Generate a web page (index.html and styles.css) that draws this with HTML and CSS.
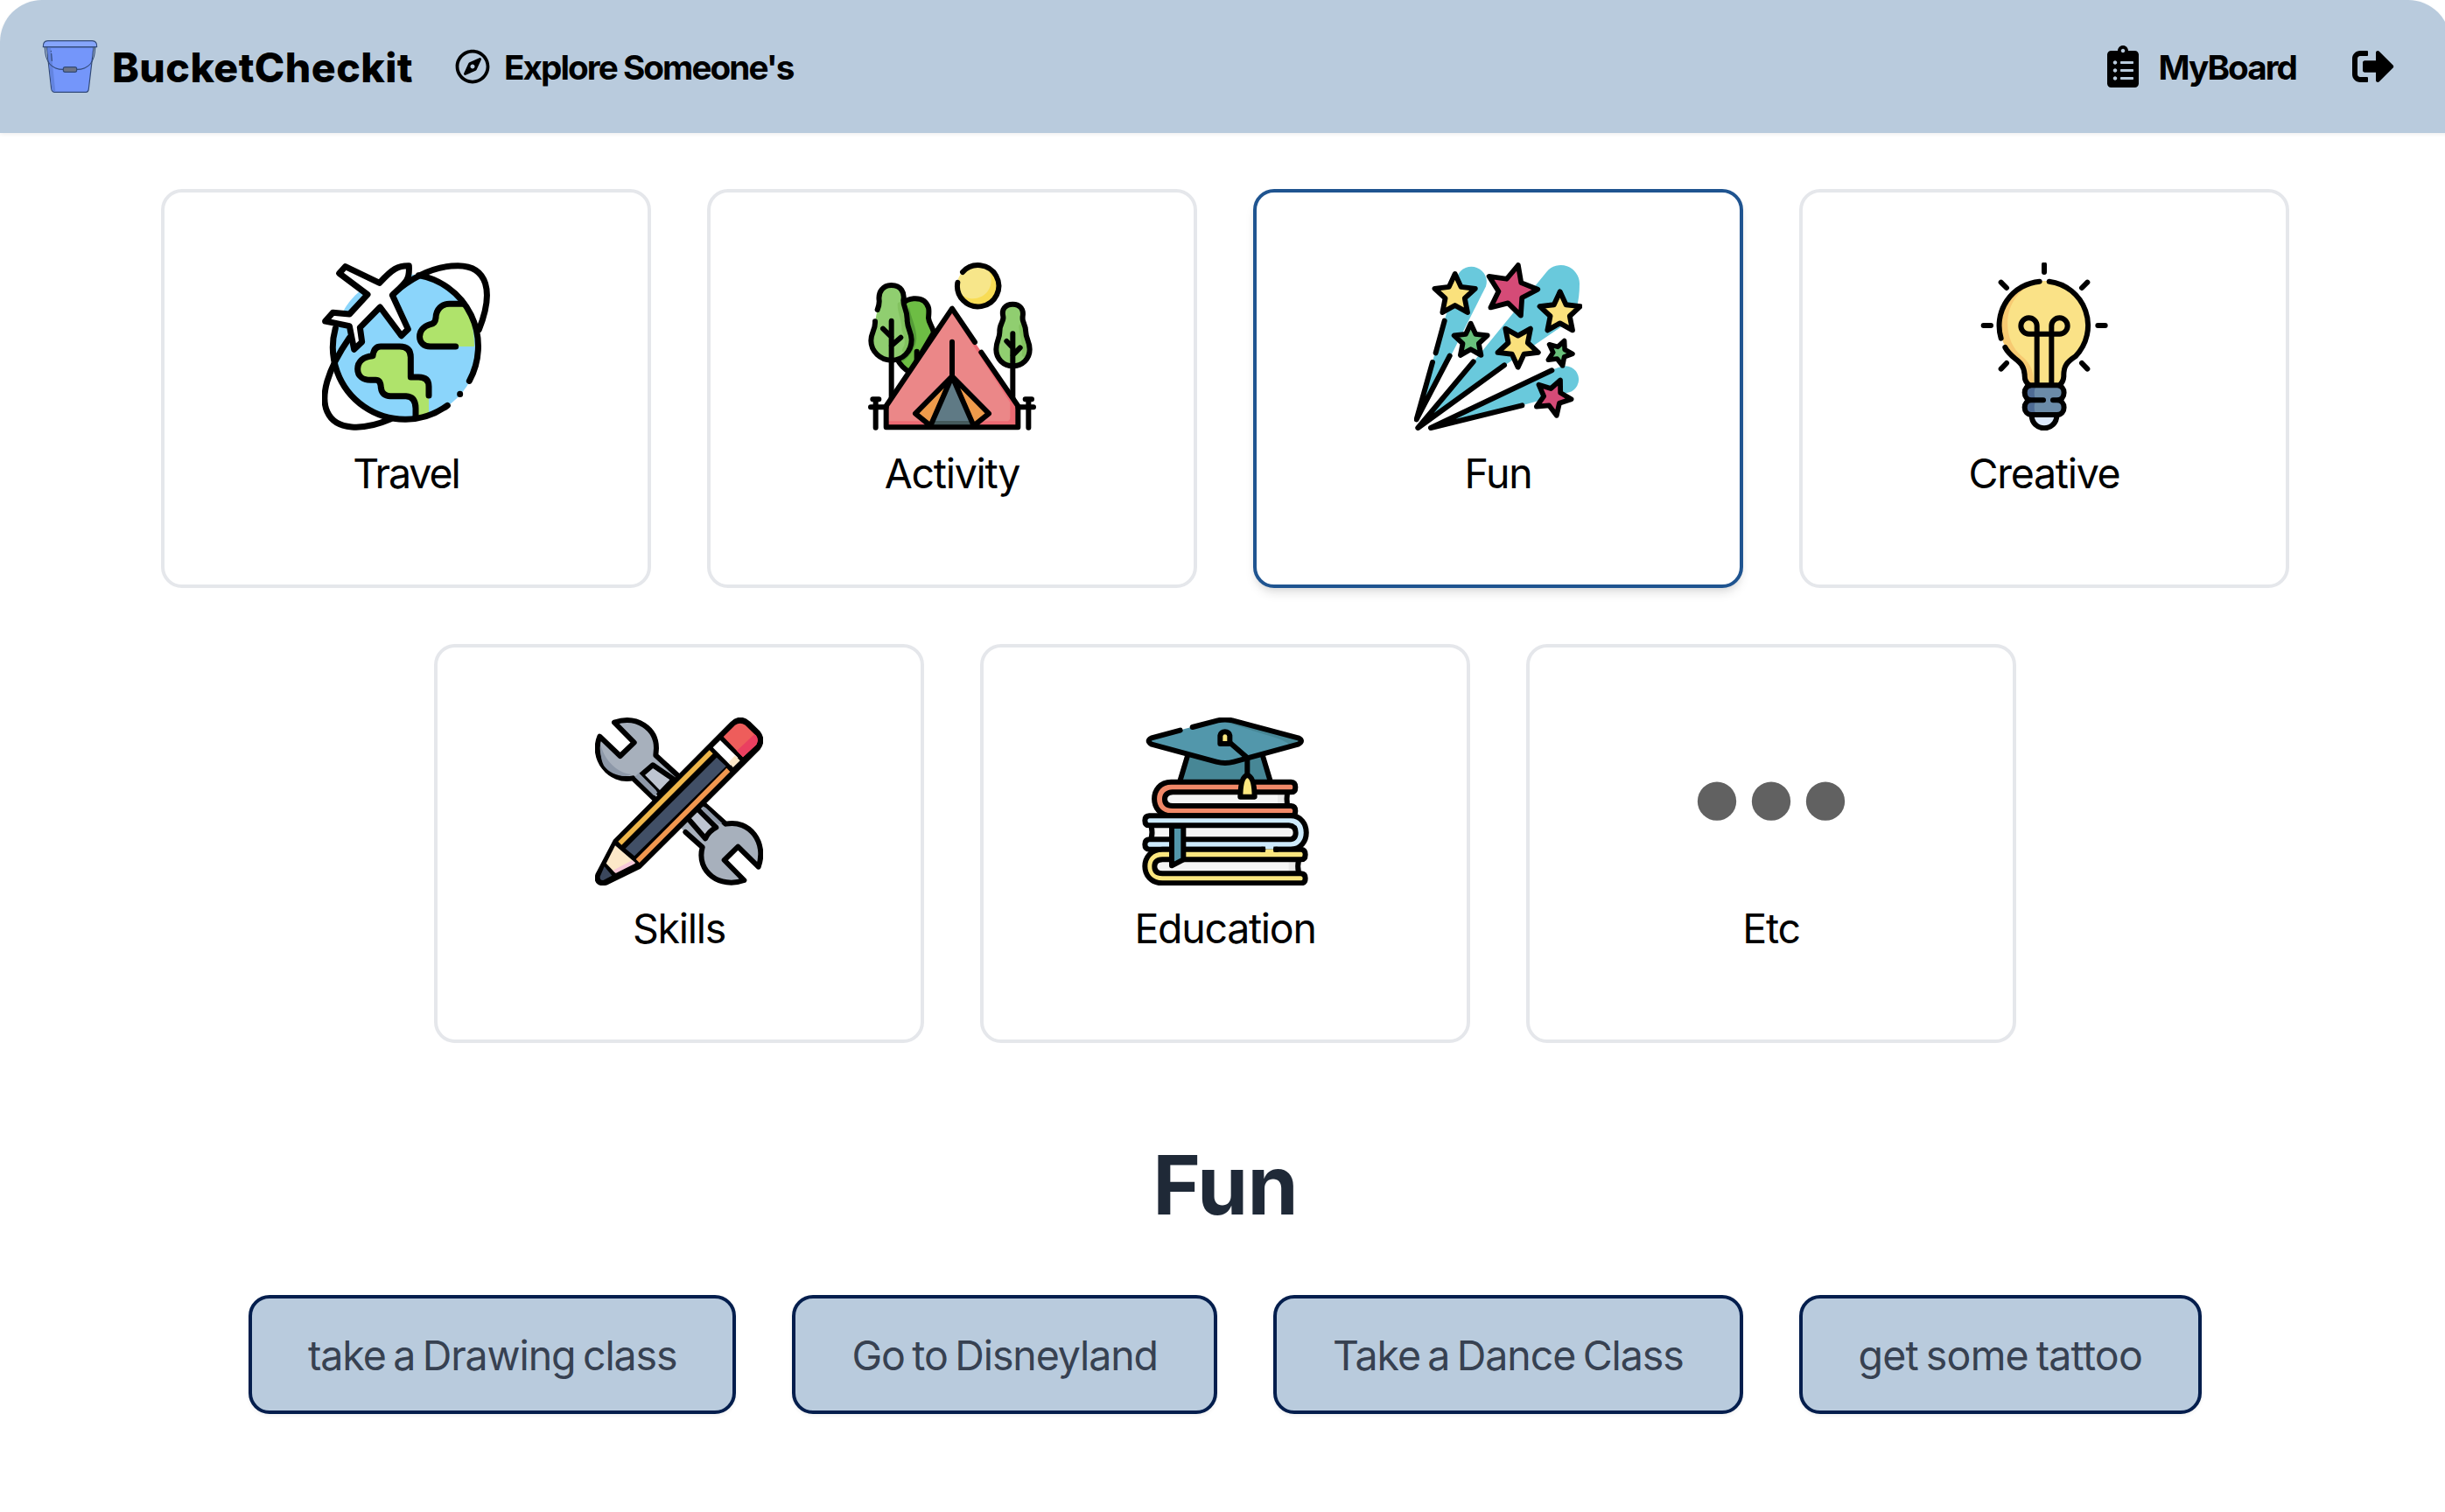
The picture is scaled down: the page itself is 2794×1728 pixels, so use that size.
FILE: index.html
```html
<!DOCTYPE html>
<html lang="en">
<head>
<meta charset="utf-8">
<title>BucketCheckit</title>
<link rel="stylesheet" href="styles.css">
</head>
<body>
<div class="page">
  <header class="header">
    <div class="nav-group">
      <a class="brand">
        <svg class="brand-icon" viewBox="24 42 192 192">
          <g stroke="#324a78" stroke-width="3.5" stroke-linejoin="round" stroke-linecap="round" fill="none">
            <path fill="#7496fa" d="M40 71 L56 215 Q58 226 68 226 H174 Q183 226 184 215 L201 71 Z"/>
            <path stroke="none" fill="#6384e0" d="M42 73 L58 215 Q60 224 70 224 L54 73 Z"/>
            <path fill="#86a5fb" d="M28 71 Q27 50 44 50 H196 Q213 50 212 71 Z"/>
            <path d="M34 71 C34 125 60 148 97 148 M143 148 C180 148 206 125 206 71 M55 85 V86 M56 94 L58 118"/>
            <rect x="97" y="140" width="46" height="17" rx="6" fill="#6d7488"/>
          </g>
        </svg>
        <span class="brand-name">BucketCheckit</span>
      </a>
      <a class="nav-link explore">
        <svg class="icon-compass" viewBox="0 0 496 512"><path d="M347.94 129.86L203.6 195.83a31.938 31.938 0 0 0-15.77 15.77l-65.97 144.34c-7.61 16.65 9.54 33.81 26.2 26.2l144.34-65.97a31.938 31.938 0 0 0 15.77-15.77l65.97-144.34c7.61-16.66-9.54-33.81-26.2-26.2zm-77.36 148.72c-12.47 12.47-32.69 12.47-45.16 0-12.47-12.47-12.47-32.69 0-45.16 12.47-12.47 32.69-12.47 45.16 0 12.47 12.47 12.47 32.69 0 45.16zM248 8C111.03 8 0 119.03 0 256s111.03 248 248 248 248-111.03 248-248S384.97 8 248 8zm0 448c-110.28 0-200-89.72-200-200S137.72 56 248 56s200 89.72 200 200-89.72 200-200 200z"/></svg>
        <span class="nav-label">Explore Someone's</span>
      </a>
    </div>
    <div class="nav-group">
      <a class="nav-link board">
        <svg class="icon-nav" viewBox="0 0 384 512"><path fill-rule="evenodd" d="M336 64h-80c0-35.300-28.700-64-64-64s-64 28.700-64 64H48C21.500 64 0 85.500 0 112v352c0 26.500 21.500 48 48 48h288c26.500 0 48-21.500 48-48V112c0-26.500-21.500-48-48-48zM96 424c-13.300 0-24-10.700-24-24s10.700-24 24-24 24 10.700 24 24-10.700 24-24 24zm0-96c-13.300 0-24-10.700-24-24s10.700-24 24-24 24 10.700 24 24-10.700 24-24 24zm0-96c-13.300 0-24-10.700-24-24s10.700-24 24-24 24 10.700 24 24-10.700 24-24 24zm96-192c13.300 0 24 10.700 24 24s-10.700 24-24 24-24-10.700-24-24 10.700-24 24-24zm128 368c0 4.400-3.600 8-8 8H168c-4.400 0-8-3.600-8-8v-16c0-4.400 3.600-8 8-8h144c4.400 0 8 3.600 8 8v16zm0-96c0 4.400-3.600 8-8 8H168c-4.400 0-8-3.600-8-8v-16c0-4.400 3.600-8 8-8h144c4.400 0 8 3.600 8 8v16zm0-96c0 4.400-3.600 8-8 8H168c-4.400 0-8-3.600-8-8v-16c0-4.400 3.600-8 8-8h144c4.400 0 8 3.600 8 8v16z"/></svg>
        <span class="nav-label">MyBoard</span>
      </a>
      <a class="nav-link">
        <svg class="icon-nav" viewBox="0 0 512 512"><path d="M497 273L329 441c-15 15-41 4.500-41-17v-96H152c-13.300 0-24-10.700-24-24v-96c0-13.300 10.700-24 24-24h136V88c0-21.400 25.900-32 41-17l168 168c9.300 9.400 9.300 24.600 0 34zM192 436v-40c0-6.600-5.400-12-12-12H96c-17.700 0-32-14.300-32-32V160c0-17.700 14.300-32 32-32h84c6.600 0 12-5.400 12-12V76c0-6.600-5.400-12-12-12H96c-53 0-96 43-96 96v192c0 53 43 96 96 96h84c6.600 0 12-5.400 12-12z"/></svg>
      </a>
    </div>
  </header>

  <main class="content">
    <section class="categories">
      <div class="card">
        <svg class="card-icon" viewBox="84 60 576 576">
          <circle cx="373" cy="348" r="248" fill="#8bd5fb"/>
          <path fill="#afe36b" d="M606 348 H455 C408 348 405 285 455 272 L472 270 C475 225 490 202 520 202 H570 Q606 260 606 348 Z"/>
          <path fill="#afe36b" d="M450 578 V485 Q450 453 415 453 H388 V385 Q388 348 350 348 H285 Q262 348 258 380 C225 382 206 400 206 425 C206 450 225 463 250 463 H268 Q285 463 286 490 Q290 518 318 518 H372 Q405 520 405 560 V588 Z"/>
          <g class="line line-bold">
            <path d="M415 104 A247 247 0 0 1 589 466 M557 511 V511.500 M514 550 A247 247 0 0 1 130 285"/>
            <path d="M330 165 C400 105 475 71 550 71 C652 72 674 160 622 290 M178 318 C100 430 78 520 102 572 C130 637 225 637 318 597"/>
            <path d="M542 348 H455 C408 348 405 285 455 272 Q472 270 474 250 C475 220 495 202 520 202 H570"/>
            <path d="M450 516 V485 Q450 453 415 453 H388 V385 Q388 348 350 348 H285 Q262 348 258 380 C225 382 206 400 206 425 C206 450 225 463 250 463 H268 Q285 463 286 490 Q290 518 318 518 H372 Q405 520 405 560 V588"/>
            <path fill="#fff" d="M382 71 C385 120 373 127 325 172 L379 289 L356 311 L283 213 L214 283 L221 332 L194 358 L178 278 L95 261 L121 232 L178 237 L240 170 L143 97 L164 74 L281 130 C325 82 345 70 382 71 Z"/>
          </g>
        </svg>
        <span class="card-label card-label-tight">Travel</span>
      </div>

      <div class="card">
        <svg class="card-icon" viewBox="66 60 576 576">
          <circle cx="443" cy="139" r="71" fill="#f8dc55"/>
          <path fill="#f7e68a" d="M372 139 A71 71 0 0 1 470 74 C510 120 480 195 410 182 Q372 170 372 139 Z"/>
          <g class="line">
            <path d="M390 93 A71 71 0 1 1 373 128"/>
            <path fill="#6dbd44" d="M210 437 Q180 420 165 390 L185 200 C205 180 240 180 258 192 C278 210 275 225 273 250 C275 270 285 275 291 300 Z"/>
            <path d="M233 365 V395"/>
          </g>
          <path fill="#559c38" d="M207 210 C212 250 232 280 232 320 C230 355 205 385 185 400 L180 390 L200 250 Z"/>
          <path fill="#90ce70" d="M98 222 C95 160 115 138 146 138 C180 138 192 165 187 185 C182 215 202 225 200 260 C202 290 215 300 215 325 C215 365 185 395 146 395 C108 395 76 365 76 328 C76 300 92 290 90 262 Z"/>
          <path fill="#90ce70" d="M562 203 C535 203 523 222 529 245 C533 262 515 270 517 300 C517 320 505 330 505 358 C505 390 530 415 562 415 C595 415 620 390 620 358 C620 330 607 320 607 300 C607 270 592 265 596 245 C600 222 588 203 562 203 Z"/>
          <path class="line line-leaf" d="M176 205 C177 240 194 265 190 290 C205 320 203 345 192 360 M592 280 C592 300 609 340 602 375"/>
          <g class="line">
            <path d="M98 222 Q105 205 104 190 C100 160 118 138 146 138 C180 138 192 165 187 190 C187 215 202 225 200 260 C202 290 215 300 215 325 C215 365 185 395 146 395 C108 395 76 365 76 328 C76 300 92 290 90 262"/>
            <path d="M146 260 V540 M117 287 L146 315 M178 317 L146 345"/>
            <path d="M562 203 C535 203 523 222 529 245 C533 262 515 270 517 300 C517 320 505 330 505 358 C505 390 530 415 562 415 C595 415 620 390 620 358 C620 330 607 320 607 300 C607 270 592 265 596 245 C600 222 588 203 562 203 Z"/>
            <path d="M562 304 V530 M541 330 L562 352 M587 352 L562 378"/>
          </g>
          <path fill="#ec6a73" d="M354 220 L128 550 V625 H580 V550 Z"/>
          <path fill="#eb8788" d="M354 240 L345 232 L128 550 V604 H540 Q553 604 553 590 V540 L362 245 Z"/>
          <path fill="#5f7a85" d="M354 450 L286 618 H422 Z"/>
          <path fill="#455a5c" d="M292 603 H416 L422 618 H286 Z"/>
          <path fill="#ee9b4b" d="M354 450 L228 578 L280 622 Z M354 450 L480 578 L428 622 Z"/>
          <g class="line">
            <path d="M432 333 L354 218 L128 552 V625 H580 V552 L454 368 M354 332 V450 L228 578 L280 620 L354 450 L428 620 L480 578 L354 450"/>
            <path d="M75 556 H128 M92 529 V626 M82 529 H103 M580 556 H633 M616 529 V626 M605 529 H627"/>
          </g>
        </svg>
        <span class="card-label">Activity</span>
      </div>

      <div class="card card-active">
        <svg class="card-icon" viewBox="48 60 576 576">
          <defs>
            <path id="star" d="M0 -100 L28.200 -38.800 L95.100 -30.900 L45.700 14.800 L58.800 80.900 L0 48 L-58.800 80.900 L-45.700 14.800 L-95.100 -30.900 L-28.200 -38.800 Z"/>
          </defs>
          <g fill="#69c9dc">
            <path d="M56 598 L118 375 L197 105 A52 52 0 0 1 294 142 L175 378 L62 598 Z"/>
            <path d="M62 627 L252 400 L502 92 A64 64 0 0 1 615 132 Q615 230 575 265 L360 412 Z"/>
            <path d="M105 627 L523 427 L552 417 A46 46 0 0 1 580 505 L418 550 Z"/>
          </g>
          <path class="line" d="M152 260 L122 370 M111 402 L56 598 L170 380 M251 400 L61 627 L357 412 M520 430 L105 627 L418 550"/>
          <g class="line">
            <use href="#star" fill="#fae17c" stroke-width="24" transform="translate(188 172) scale(.73)"/>
            <use href="#star" fill="#d54b77" stroke-width="19" transform="translate(381 157) rotate(15) scale(.91)"/>
            <use href="#star" fill="#fae17c" stroke-width="24" transform="translate(548 233) scale(.73)"/>
            <use href="#star" fill="#69c17c" stroke-width="29" transform="translate(242 329) scale(.6)"/>
            <use href="#star" fill="#fae17c" stroke-width="24" transform="translate(404 346) rotate(180) scale(.73)"/>
            <use href="#star" fill="#69c17c" stroke-width="37" transform="translate(546 370) rotate(22) scale(.45)"/>
            <use href="#star" fill="#d54b77" stroke-width="27" transform="translate(523 522) rotate(24) scale(.64)"/>
          </g>
        </svg>
        <span class="card-label">Fun</span>
      </div>

      <div class="card">
        <svg class="card-icon" viewBox="60 60 576 576">
          <path fill="#f7ca72" d="M348 124 A152 152 0 0 0 214 348 C235 390 275 395 282 450 Q285 475 298 480 H400 Q414 470 415 450 C415 410 440 392 470 368 A152 152 0 0 0 348 124 Z"/>
          <path fill="#fae287" d="M348 124 C200 150 195 320 270 380 C300 405 312 425 312 480 H400 Q414 470 415 450 C415 410 440 392 470 368 A152 152 0 0 0 348 124 Z"/>
          <rect x="282" y="481" width="133" height="101" rx="25" fill="#4e6b94"/>
          <path fill="#6b8ba8" d="M325 481 H390 Q415 485 415 507 Q410 532 400 532 Q415 540 415 557 Q412 582 390 582 H325 Q314 575 314 557 Q314 540 322 532 Q314 525 314 507 Q314 490 325 481 Z"/>
          <path fill="#dce9fc" d="M305 585 A43 43 0 0 0 391 585 Z"/>
          <g class="line">
            <path d="M332 125 A152 152 0 0 0 200 320 M214 351 C238 397 277 390 281 445 Q280 470 298 481 M365 125 A152 152 0 0 1 455 382 C425 402 414 415 415 450 Q414 470 400 481"/>
            <path d="M323 475 V277 A27.500 27.500 0 1 0 296 305 H400 A27.500 27.500 0 1 0 373 277 V475"/>
            <path d="M345 532 H305 C273 532 273 481 305 481 H391 C424 481 424 532 391 532 H378 M391 532 C424 532 424 582 391 582 H305 C273 582 273 532 305 532 M305 585 A43 43 0 0 0 391 585"/>
            <path d="M348 67 V93 M200 128 L219 147 M496 128 L477 147 M140 276 H165 M532 276 H557 M200 425 L219 405 M496 425 L477 405"/>
          </g>
        </svg>
        <span class="card-label">Creative</span>
      </div>

      <div class="card">
        <svg class="card-icon" viewBox="60 60 576 576">
          <g class="line">
            <path fill="#a7b0bc" d="M126 77 C205 50 270 100 270 165 L268 190 L350 265 L270 345 L190 268 C110 285 45 200 76 125 L146 192 L194 146 Z"/>
            <path fill="#bec5d1" d="M258 223 L218 257 L282 322 L330 272 Z"/>
            <path fill="#a7b0bc" stroke="none" d="M425 350 L508 425 C590 405 645 490 620 572 L550 503 L503 549 L571 618 C500 645 410 590 428 505 L355 440 Z"/>
            <path d="M425 350 L508 425 C590 408 650 490 620 572 L550 503 L503 549 L571 618 C490 648 405 590 428 505 L370 453"/>
            <path fill="#bec5d1" d="M375 402 L438 475 Q450 450 475 437 L410 372 Z"/>
          </g>
          <path fill="#8d98a8" d="M80 150 C85 195 130 250 185 255 C160 270 110 255 90 225 Q75 195 80 150 Z M196 263 L210 250 L268 308 L274 318 L262 328 Z M427 362 L440 370 L496 423 L484 427 L430 380 Z"/>
          <path class="line line-solid" d="M130 485 L530 82 Q557 56 585 80 L618 112 Q638 138 618 165 L212 570 L100 625 C80 632 62 625 70 600 Z"/>
          <path fill="#efb64a" d="M139 485 L151 497 L464 184 L452 172 Z"/>
          <path fill="#414f66" d="M164 509 L477 197 L509 227 L195 535 Z"/>
          <path fill="#f1974f" d="M200 546 L212 558 L523 246 L511 233 Z"/>
          <path fill="#fff" d="M489 138 L464 163 L525 224 L550 198 Z"/>
          <path fill="#fce8c8" d="M540 190 L518 214 L533 231 L557 208 Z"/>
          <path fill="#ee5d5b" d="M500 126 L540 86 Q557 74 575 86 L612 122 Q622 135 613 153 L567 196 Z"/>
          <path fill="#ea3f60" d="M546 174 L606 118 L612 122 Q622 135 613 153 L567 196 Z"/>
          <path fill="#fce8c8" d="M129 499 L98 560 L128 592 L198 558 Z"/>
          <path fill="#f6c8d8" d="M121 584 L188 550 L198 560 L131 594 Z"/>
          <path fill="#3b475c" d="M92 571 L77 605 Q76 619 88 618 L118 602 Z"/>
        </svg>
        <span class="card-label">Skills</span>
      </div>

      <div class="card">
        <svg class="card-icon" viewBox="72 60 576 576">
          <path fill="#478796" d="M230 190 L204 281 H515 L490 190 Z"/>
          <path fill="#5297ab" d="M230 97 L335 70 Q360 65 385 70 L610 130 Q632 140 610 152 L390 212 Q360 220 330 212 L108 152 Q88 140 108 130 Z"/>
          <path fill="#478796" d="M355 74 H385 L610 134 L622 141 L585 156 Q560 135 520 125 Z"/>
          <path class="line" d="M248 93 L335 70 Q360 65 385 70 L610 130 Q632 140 610 152 L390 212 Q360 220 330 212 L108 152 Q88 140 108 130 L206 104 M230 195 L206 275 M490 195 L514 275"/>
          <path fill="#f5f5f5" d="M160 316 H575 V363 H160 Z M107 430 H600 V478 H107 Z M120 547 H612 V595 H120 Z"/>
          <path fill="#e9e9e9" d="M540 316 H568 V363 H540 Z M578 547 H605 V595 H578 Z"/>
          <g class="line">
            <path fill="#f08868" d="M175 281 H586 Q601 282 601 299 Q601 316 586 316 H180 Q153 318 153 340 Q153 363 180 363 H586 Q601 364 601 380 Q601 397 586 397 H175 C98 397 98 281 175 281 Z"/>
            <path fill="#cdeafc" d="M585 397 H100 Q85 398 85 413 Q85 430 100 430 H578 Q602 432 602 455 Q602 478 578 478 H100 Q85 479 85 495 Q85 512 100 512 H585 C656 512 656 397 585 397 Z"/>
            <path fill="#fbe67f" d="M145 512 H620 Q635 513 635 530 Q635 547 620 547 H145 Q118 548 118 571 Q118 595 145 595 H620 Q635 596 635 611 Q635 628 620 628 H145 C65 628 65 512 145 512 Z"/>
            <path d="M573 320 Q570 340 573 360 M107 433 Q112 455 107 475 M612 550 Q607 570 612 592"/>
            <path fill="#5297ab" d="M177 432 V568 L217 547 V432 Z"/>
            <path fill="#fbe67f" d="M343 150 V122 A17 17 0 0 1 376 122 V150 Z"/>
            <path d="M378 148 L436 198 V255"/>
            <path fill="#fbe67f" d="M412 332 Q413 262 436 258 Q460 262 461 332 Z"/>
          </g>
          <path fill="#cdeafc" d="M498 500 H526 V512 H498 Z"/>
          <path fill="#fbe67f" d="M498 512 H526 V524 H498 Z"/>
          <path class="line" d="M486 512 H490 M534 512 H538"/>
        </svg>
        <span class="card-label">Education</span>
      </div>

      <div class="card">
        <svg class="card-icon" viewBox="84 -120 576 576" fill="#616161">
          <circle cx="186" cy="167" r="66.500"/>
          <circle cx="372" cy="167" r="66.500"/>
          <circle cx="558" cy="167" r="66.500"/>
        </svg>
        <span class="card-label">Etc</span>
      </div>
    </section>

    <h1 class="title">Fun</h1>

    <section class="ideas">
      <button class="idea">take a Drawing class</button>
      <button class="idea">Go to Disneyland</button>
      <button class="idea">Take a Dance Class</button>
      <button class="idea">get some tattoo</button>
    </section>
  </main>
</div>
</body>
</html>
```
FILE: styles.css
```css
* {
  box-sizing: border-box;
}

html {
  overflow: hidden;
}

body {
  margin: 0;
  background: #fff;
  font-family: Inter, "Liberation Sans", sans-serif;
  color: #000;
}

.page {
  width: 2800px;
  min-height: 1728px;
}

.header {
  display: flex;
  align-items: center;
  justify-content: space-between;
  height: 152px;
  padding: 0 64px 0 48px;
  background: #b9cbdd;
  border-radius: 48px 48px 0 0;
  box-shadow: 0 2px 4px rgba(0, 0, 0, 0.06);
}

.nav-group,
.brand,
.nav-link {
  display: flex;
  align-items: center;
}

.nav-group {
  gap: 48px;
}

.brand {
  gap: 16px;
  font-size: 46.5px;
  font-weight: 800;
  letter-spacing: 0.42px;
}

.brand-icon {
  width: 64px;
  height: 64px;
}

.brand-name,
.nav-label {
  padding-top: 2px;
}

.nav-link {
  gap: 16px;
  font-size: 38.7px;
  font-weight: 700;
  letter-spacing: -1.95px;
}

.icon-compass {
  width: 40px;
  height: 40px;
}

.icon-nav {
  width: 48px;
  height: 48px;
}

.board {
  margin-right: 16px;
}

.content {
  display: flex;
  flex-direction: column;
  align-items: center;
  padding-top: 64px;
}

.categories {
  display: flex;
  flex-wrap: wrap;
  justify-content: center;
  gap: 64px;
  width: 2432px;
}

.card {
  display: flex;
  flex-direction: column;
  align-items: center;
  justify-content: center;
  width: 560px;
  height: 456px;
  border: 4px solid #e5e7eb;
  border-radius: 24px;
  background: #fff;
}

.card-active {
  border-color: #1f5490;
  box-shadow: 0 8px 12px -2px rgba(0, 0, 0, 0.1), 0 4px 8px -4px rgba(0, 0, 0, 0.1);
}

.card-icon {
  width: 192px;
  height: 192px;
}

.line {
  fill: none;
  stroke: #000;
  stroke-width: 18px;
  stroke-linecap: round;
  stroke-linejoin: round;
}

.line-bold {
  stroke-width: 21px;
}

.line-solid {
  fill: #000;
}

.line-leaf {
  stroke: #82c25f;
}

.card-label {
  height: 96px;
  padding-top: 1px;
  font-size: 46.5px;
  line-height: 96px;
  letter-spacing: -1.3px;
}

.card-label-tight {
  letter-spacing: -2.1px;
}

.title {
  margin: 98px 0 62px;
  font-size: 93.5px;
  font-weight: 700;
  line-height: 128px;
  letter-spacing: -0.8px;
  color: #1f2937;
}

.ideas {
  display: flex;
  gap: 64px;
}

.idea {
  height: 136px;
  padding: 2px 64px 0;
  border: 4px solid #041e4d;
  border-radius: 24px;
  background: #b9cbdd;
  box-shadow: 0 2px 4px rgba(0, 0, 0, 0.06);
  font-family: inherit;
  font-size: 46.5px;
  letter-spacing: -1.1px;
  word-spacing: -3.5px;
  color: #374151;
}

.idea:last-child {
  letter-spacing: -0.8px;
}
```
